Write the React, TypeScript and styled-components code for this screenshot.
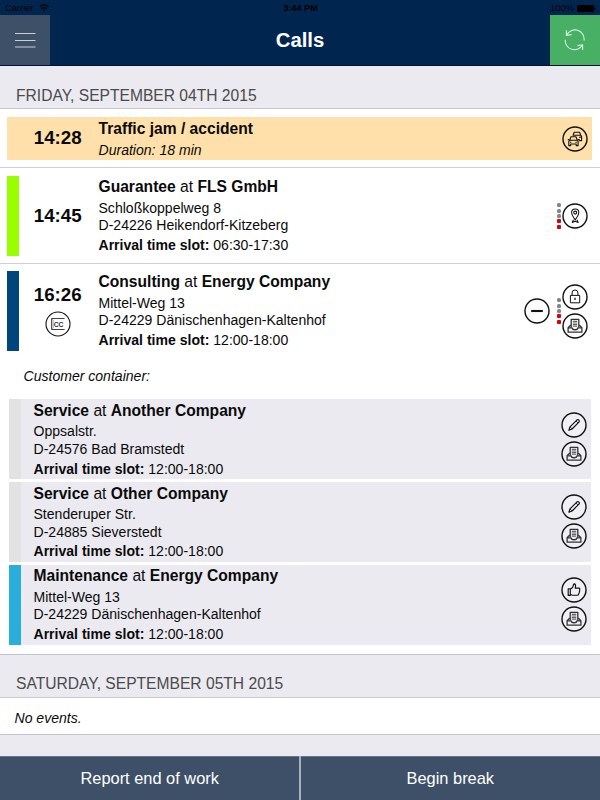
import React from "react";
import styled, { createGlobalStyle } from "styled-components";

const GlobalStyle = createGlobalStyle`
  * { box-sizing: border-box; }
  body {
    margin: 0;
    font-family: "Liberation Sans", Arial, sans-serif;
    color: #0a0a0a;
    background: #ebeaf0;
  }
`;

const Page = styled.div`
  width: 600px;
  height: 800px;
  display: flex;
  flex-direction: column;
  overflow: hidden;
  background: #ebeaf0;
`;

const Top = styled.header`
  flex: none;
  height: 66px;
  background: #00264f;
  border-bottom: 1px solid #001231;
`;

const StatusBar = styled.div`
  height: 15px;
  display: grid;
  grid-template-columns: 1fr auto 1fr;
  align-items: center;
  padding: 1px 4px 0 5px;
  font-size: 9.4px;
  line-height: 14px;
  color: #000;
`;

const StatusGroup = styled.div<{ $end?: boolean }>`
  display: flex;
  align-items: center;
  gap: ${(p) => (p.$end ? 3 : 5)}px;
  justify-content: ${(p) => (p.$end ? "flex-end" : "flex-start")};
`;

const Clock = styled.span`
  font-weight: 700;
  font-size: 9.2px;
`;

const NavBar = styled.div`
  height: 50px;
  display: grid;
  grid-template-columns: 50px 1fr 50px;
`;

const NavButton = styled.button<{ $tone: string }>`
  display: flex;
  align-items: center;
  justify-content: center;
  padding: 0;
  border: 0;
  background: ${(p) => p.$tone};
`;

const PageTitle = styled.h1`
  margin: 0;
  text-align: center;
  font-size: 20.3px;
  line-height: 50px;
  color: #fff;
`;

const Schedule = styled.main`
  flex: 1;
  min-height: 0;
`;

const DayHeader = styled.h2<{ $ruled?: boolean }>`
  margin: 0;
  height: ${(p) => (p.$ruled ? 44 : 43)}px;
  padding: ${(p) => (p.$ruled ? 19 : 20)}px 0 0 16px;
  border-top: ${(p) => (p.$ruled ? "1px solid #c4c3cd" : "0")};
  border-bottom: 1px solid #c9c8d0;
  font-size: 15.625px;
  font-weight: 400;
  line-height: 19px;
  color: #4b4b4b;
`;

const Entry = styled.section<{ $height: number; $last?: boolean }>`
  height: ${(p) => p.$height}px;
  padding: ${(p) => (p.$last ? 7 : 8)}px 8px 0 7px;
  background: #fff;
  border-bottom: ${(p) => (p.$last ? "0" : "1px solid #d0cfd7")};
`;

const EntryBody = styled.div<{ $tint?: string; $height: number }>`
  display: grid;
  grid-template-columns: 12px 79.5px 1fr auto;
  height: ${(p) => p.$height}px;
  background: ${(p) => p.$tint ?? "transparent"};
`;

const Marker = styled.div<{ $color?: string }>`
  background: ${(p) => p.$color ?? "transparent"};
`;

const TimeCell = styled.div`
  display: flex;
  flex-direction: column;
  align-items: center;
  justify-content: center;
  gap: 5px;
  padding: 0 2px 1px 0;
  font-size: 18.75px;
  font-weight: 700;
  line-height: 22px;
`;

const Details = styled.div<{ $drop?: number }>`
  padding-top: ${(p) => p.$drop ?? 1}px;
  white-space: nowrap;
`;

const Heading = styled.div`
  font-size: 15.625px;
  line-height: 20px;
`;

const Address = styled.div`
  margin-top: 2.6px;
  font-size: 14.0625px;
  line-height: 17.4px;
`;

const Slot = styled.div`
  margin-top: 2.4px;
  font-size: 14.0625px;
  line-height: 17.4px;
`;

const Duration = styled.div`
  margin-top: 2.6px;
  font-size: 14.0625px;
  line-height: 17.4px;
  font-style: italic;
`;

const Actions = styled.div`
  display: flex;
  align-items: center;
  gap: 3px;
  padding-right: 4px;
`;

const IconStack = styled.div`
  display: flex;
  flex-direction: column;
  gap: 3px;
`;

const Dots = styled.div<{ $spaced?: boolean }>`
  display: flex;
  flex-direction: column;
  gap: 1.4px;
  margin: 0 -1.5px 0 ${(p) => (p.$spaced ? 3.5 : 0)}px;
`;

const Dot = styled.i<{ $alert?: boolean }>`
  width: 4px;
  height: 4px;
  border-radius: ${(p) => (p.$alert ? 1 : 1.5)}px;
  background: ${(p) => (p.$alert ? "#d9000d" : "#858585")};
`;

const Note = styled.p`
  margin: 0;
  padding: 16px 0 0 16.5px;
  height: 40px;
  font-size: 14.0625px;
  font-style: italic;
  line-height: 18px;
`;

const Container = styled.div`
  display: flex;
  flex-direction: column;
  gap: 2.8px;
  margin: 8px 1px 0 1.5px;
`;

const ContainerItem = styled.article`
  display: grid;
  grid-template-columns: 12px 1fr auto;
  column-gap: 13px;
  height: 80px;
  background: #ebeaf0;
`;

const Empty = styled.div`
  height: 37px;
  padding: 11px 0 0 14.5px;
  background: #fff;
  border-bottom: 1px solid #c4c3cd;
  font-size: 14.0625px;
  font-style: italic;
  line-height: 18px;
`;

const Footer = styled.footer`
  flex: none;
  display: grid;
  grid-template-columns: 299.4px 1fr;
  column-gap: 1.2px;
  height: 44px;
  background: #a9b1bd;
`;

const FooterButton = styled.button`
  border: 0;
  border-top: 1px solid #66738a;
  padding: 0 0 1px;
  background: #3d5068;
  color: #fff;
  font-family: inherit;
  font-size: 16.4px;
`;

const GlyphText = styled.text`
  font: 700 8px "Liberation Sans", Arial, sans-serif;
`;

type Kind = "cars" | "pin" | "lock" | "tray" | "minus" | "pencil" | "thumb" | "cc";

const glyphs: Record<Kind, React.ReactNode> = {
  cars: (
    <g strokeWidth="1.1">
      <path d="M10.9 9.6 L12.2 6.3 H17.6 L18.8 9.4 L19.6 10.6 V14.6 H17.4 V13.2 M11.4 9.2 H18.6 M17 11.3 H19" />
      <path fill="#ffe0ab" d="M7.7 14.2 L9 10.8 H14 L15.3 14.2 L16.1 15.4 V19.6 H14.2 V18 H8.7 V19.6 H6.8 V15.4 Z" />
      <path d="M7.8 14.2 H15.2 M8 16.2 H9.4 M13.4 16.2 H14.8 M5.8 13.6 H7.2 M15.6 13.6 H17" />
    </g>
  ),
  pin: (
    <g strokeWidth="1.05">
      <path d="M13.2 17 C12.2 14.8 9.6 12.6 9.6 9.6 A3.6 3.6 0 0 1 16.8 9.6 C16.8 12.6 14.2 14.8 13.2 17 Z" />
      <circle cx="13.2" cy="9.6" r="1.5" />
      <path d="M11.5 16.8 L10.2 19.4 L13.2 18.2 L16.2 19.4 L14.9 16.8" />
    </g>
  ),
  lock: (
    <g strokeWidth="1">
      <rect x="8.4" y="11.4" width="9.3" height="7.4" />
      <path d="M10.1 11.4 V8.9 A2.9 2.9 0 0 1 15.9 8.9 V11.4" />
      <path d="M13 13.8 V16" strokeWidth="1.3" />
    </g>
  ),
  tray: (
    <g strokeWidth="1.3" stroke="#333">
      <path d="M9.2 14.6 V6.3 H16.8 V14.6" />
      <path d="M10.8 8.4 H15.2 M10.8 10 H15.2 M10.8 11.6 H15.2 M10.8 13.2 H15.2" stroke="#666" strokeWidth="1.1" />
      <path d="M8.8 12 L6.1 14.8 V19.2 H19.9 V14.8 L17.2 12" />
      <path d="M6.1 14.8 H10.1 C10.5 17.4 15.5 17.4 15.9 14.8 H19.9" />
    </g>
  ),
  minus: <path d="M7.2 13 H18.8" strokeWidth="2.1" />,
  pencil: (
    <g strokeWidth="1.2">
      <path d="M7.9 18.2 L9 14.9 L15.8 8.1 Q17 7.2 17.9 8.2 Q18.8 9.2 17.9 10.2 L11.1 17 Z" />
      <path d="M9 14.9 L11.1 17 M15 9 L17 11" strokeWidth="0.8" />
    </g>
  ),
  thumb: (
    <g strokeWidth="1.15">
      <path d="M7.2 11.7 H9.3 V18.4 H7.2 Z" />
      <path d="M9.3 12.2 C11.4 11.2 12.5 9.7 12.7 7 C14.7 6.6 15 8.6 14.2 11.1 H18 Q19.3 11.4 18.6 12.8 Q19 14 18.3 14.8 Q18.5 16 17.7 16.7 Q17.7 18 16.5 18.2 H11.5 L9.3 17.5" />
    </g>
  ),
  cc: (
    <g stroke="#444">
      <path d="M19.6 7.5 H6.6 V18.5 H19.6" strokeWidth="1" />
      <path d="M6.6 7.5 L8.1 8.8 V17.2 L6.6 18.5" strokeWidth="0.5" />
      <GlyphText x="8.7" y="15.9" textLength="9.8" lengthAdjust="spacingAndGlyphs" fill="#333" stroke="none">
        CC
      </GlyphText>
    </g>
  ),
};

const Icon = ({ kind }: { kind: Kind }) => (
  <svg width="26" height="26" viewBox="0 0 26 26" fill="none" stroke="#111" strokeLinejoin="round">
    <circle cx="13" cy="13" r="12" strokeWidth={kind === "cc" ? 1.1 : 1.4} fill={kind === "cars" ? "none" : "#ffffff55"} />
    {glyphs[kind]}
  </svg>
);

const SlotDots = ({ spaced }: { spaced?: boolean }) => (
  <Dots $spaced={spaced}>
    <Dot />
    <Dot />
    <Dot />
    <Dot $alert />
    <Dot $alert />
  </Dots>
);

interface Call {
  type: string;
  company: string;
  street: string;
  city: string;
  slot: string;
}

const CallDetails = ({ type, company, street, city, slot, drop }: Call & { drop?: number }) => (
  <Details $drop={drop}>
    <Heading>
      <b>{type}</b> at <b>{company}</b>
    </Heading>
    <Address>
      {street}
      <br />
      {city}
    </Address>
    <Slot>
      <b>Arrival time slot:</b> {slot}
    </Slot>
  </Details>
);

const containerCalls: (Call & { color: string; icon: Kind })[] = [
  { type: "Service", company: "Another Company", street: "Oppsalstr.", city: "D-24576 Bad Bramstedt", slot: "12:00-18:00", color: "#e2e2e2", icon: "pencil" },
  { type: "Service", company: "Other Company", street: "Stenderuper Str.", city: "D-24885 Sieverstedt", slot: "12:00-18:00", color: "#e2e2e2", icon: "pencil" },
  { type: "Maintenance", company: "Energy Company", street: "Mittel-Weg 13", city: "D-24229 Dänischenhagen-Kaltenhof", slot: "12:00-18:00", color: "#29aedb", icon: "thumb" },
];

export default function App() {
  return (
    <>
      <GlobalStyle />
      <Page>
        <Top>
          <StatusBar>
            <StatusGroup>
              <span>Carrier</span>
              <svg width="10" height="8" viewBox="0 0 10 8" fill="none" stroke="#000" strokeWidth="1.3">
                <path d="M0.5 2.8 Q5 -1 9.5 2.8 M2.2 4.8 Q5 2.4 7.8 4.8" />
                <path d="M3.6 6 Q5 4.9 6.4 6 L5 7.6 Z" fill="#000" stroke="none" />
              </svg>
            </StatusGroup>
            <Clock>3:44 PM</Clock>
            <StatusGroup $end>
              <span>100%</span>
              <svg width="19" height="7" viewBox="0 0 19 7">
                <rect width="17" height="7" rx="1" />
                <rect x="17.5" y="2.3" width="1.2" height="2.4" />
              </svg>
            </StatusGroup>
          </StatusBar>
          <NavBar>
            <NavButton $tone="#3d5068" aria-label="Menu">
              <svg width="22" height="16" viewBox="0 0 22 16" stroke="#c6d0d6" strokeWidth="1.2">
                <path d="M1 1.5 H21.5 M1 8.5 H21.5 M1 15 H21.5" />
              </svg>
            </NavButton>
            <PageTitle>Calls</PageTitle>
            <NavButton $tone="#48b064" aria-label="Refresh">
              <svg width="22" height="22" viewBox="0 0 22 22" fill="none" stroke="#d5f3dc" strokeWidth="1.1">
                <path d="M2.6 6.2 A9.2 9.2 0 0 1 20 11.6 M18.4 16 A9.2 9.2 0 0 1 1.2 10.8" />
                <path d="M2.4 1.2 V6.4 L7.6 5.6 M18.6 21 V15.8 L13.4 16.6" />
              </svg>
            </NavButton>
          </NavBar>
        </Top>

        <Schedule>
          <DayHeader>FRIDAY, SEPTEMBER 04TH 2015</DayHeader>

          <Entry $height={59}>
            <EntryBody $height={43} $tint="#ffe0ab">
              <Marker />
              <TimeCell>14:28</TimeCell>
              <Details $drop={2}>
                <Heading>
                  <b>Traffic jam / accident</b>
                </Heading>
                <Duration>Duration: 18 min</Duration>
              </Details>
              <Actions>
                <Icon kind="cars" />
              </Actions>
            </EntryBody>
          </Entry>

          <Entry $height={96}>
            <EntryBody $height={80}>
              <Marker $color="#99ff00" />
              <TimeCell>14:45</TimeCell>
              <CallDetails type="Guarantee" company="FLS GmbH" street="Schloßkoppelweg 8" city="D-24226 Heikendorf-Kitzeberg" slot="06:30-17:30" />
              <Actions>
                <SlotDots />
                <Icon kind="pin" />
              </Actions>
            </EntryBody>
          </Entry>

          <Entry $height={390} $last>
            <EntryBody $height={80}>
              <Marker $color="#00457c" />
              <TimeCell>
                16:26
                <Icon kind="cc" />
              </TimeCell>
              <CallDetails drop={1.4} type="Consulting" company="Energy Company" street="Mittel-Weg 13" city="D-24229 Dänischenhagen-Kaltenhof" slot="12:00-18:00" />
              <Actions>
                <Icon kind="minus" />
                <SlotDots spaced />
                <IconStack>
                  <Icon kind="lock" />
                  <Icon kind="tray" />
                </IconStack>
              </Actions>
            </EntryBody>
            <Note>Customer container:</Note>
            <Container>
              {containerCalls.map(({ color, icon, ...call }) => (
                <ContainerItem key={call.company}>
                  <Marker $color={color} />
                  <CallDetails drop={1.9} {...call} />
                  <Actions>
                    <IconStack>
                      <Icon kind={icon} />
                      <Icon kind="tray" />
                    </IconStack>
                  </Actions>
                </ContainerItem>
              ))}
            </Container>
          </Entry>

          <DayHeader $ruled>SATURDAY, SEPTEMBER 05TH 2015</DayHeader>
          <Empty>No events.</Empty>
        </Schedule>

        <Footer>
          <FooterButton>Report end of work</FooterButton>
          <FooterButton>Begin break</FooterButton>
        </Footer>
      </Page>
    </>
  );
}
